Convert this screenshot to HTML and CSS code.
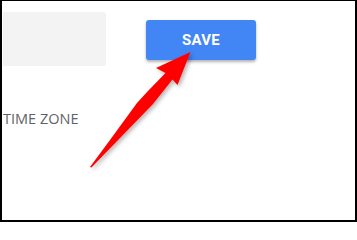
FILE: index.html
```html
<!DOCTYPE html>
<html>
<head>
<meta charset="utf-8">
<link rel="stylesheet" href="styles.css">
</head>
<body>
<div class="frame">
  <div class="top-row">
    <div class="field"></div>
    <button class="save">SAVE</button>
  </div>
  <div class="label">TIME ZONE</div>
  <svg class="arrow" viewBox="0 0 357 222" width="357" height="222">
    <defs>
      <filter id="sh" x="-20%" y="-20%" width="140%" height="140%">
        <feDropShadow dx="2" dy="2" stdDeviation="2" flood-color="#000" flood-opacity="0.3"/>
      </filter>
    </defs>
    <polygon filter="url(#sh)" fill="#ff0000"
      points="190.5,52 177.5,85 172.5,79.5 153,104 120,138 91.5,167.5 90,167 110,140 137,103 148,91 165.5,73 156,68"/>
  </svg>
</div>
</body>
</html>
```

FILE: styles.css
```css
html, body {
  margin: 0;
  padding: 0;
  background: #ffffff;
}

.frame {
  position: relative;
  box-sizing: border-box;
  width: 357px;
  height: 222px;
  border-top: 1px solid #000;
  border-left: 2px solid #000;
  border-right: 2px solid #000;
  border-bottom: 2px solid #000;
  padding: 11px 0 0 1px;
  background: #fff;
  overflow: hidden;
}

.top-row {
  display: flex;
  align-items: flex-start;
}

.field {
  width: 103px;
  height: 54px;
  background: #f3f3f3;
  border-radius: 0 3px 3px 0;
}

.save {
  margin: 8px 0 0 40px;
  width: 110px;
  height: 40px;
  border: none;
  border-radius: 3px;
  background: #4285f4;
  color: #ffffff;
  font-family: Roboto, "Liberation Sans", sans-serif;
  font-weight: 700;
  font-size: 15px;
  letter-spacing: 0.2px;
  padding: 0;
  box-shadow: 0 2px 3px rgba(0, 0, 0, 0.3);
}

.label {
  margin-top: 43px;
  font-family: "Open Sans", "Liberation Sans", sans-serif;
  font-size: 14.5px;
  font-weight: 400;
  line-height: 20px;
  color: #5f6368;
}

.arrow {
  position: absolute;
  left: -2px;
  top: -1px;
}
```
